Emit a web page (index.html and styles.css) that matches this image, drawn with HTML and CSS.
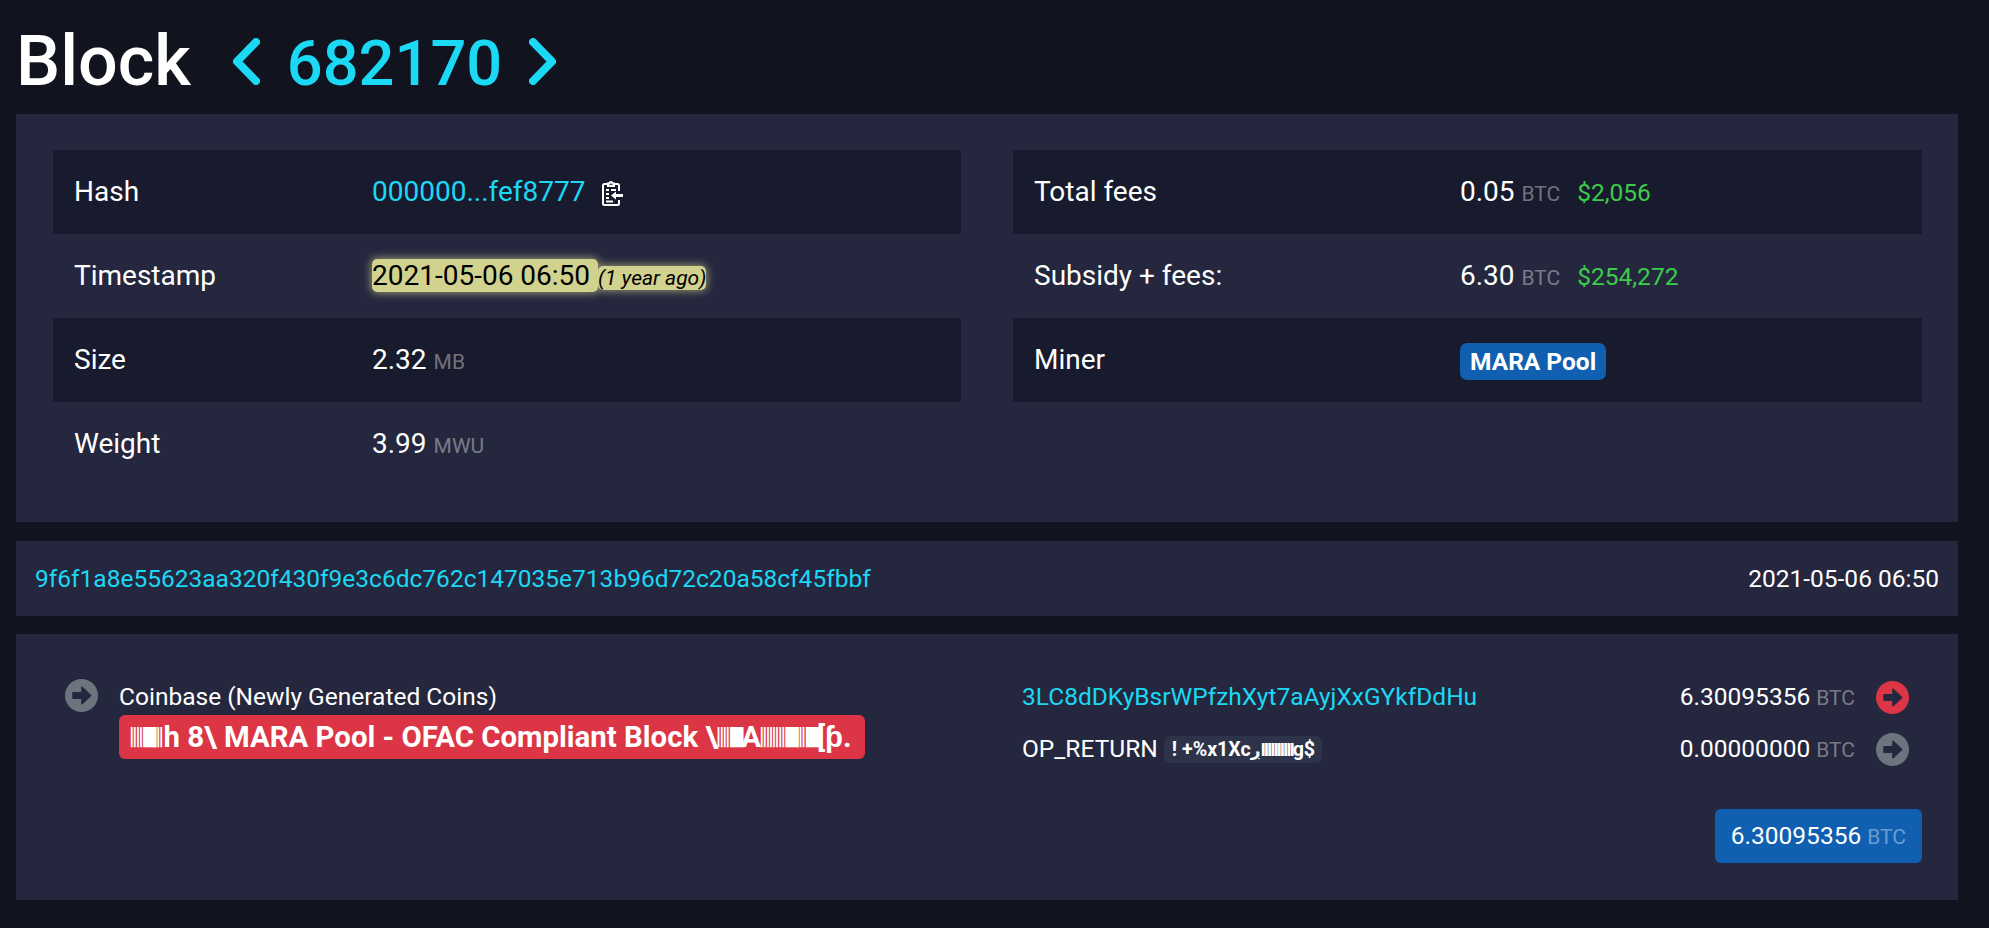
FILE: index.html
```html
<!DOCTYPE html>
<html lang="en">
<head>
<meta charset="utf-8">
<title>Block 682170</title>
<link rel="stylesheet" href="styles.css">
</head>
<body>
<header class="title">
  <h1>Block</h1>
  <a class="nav prev" href="#" aria-label="Previous block"><svg viewBox="0 0 27 47" class="chev"><path d="M23 4 L4 23.500 L23 43"/></svg></a>
  <a class="height" href="#">682170</a>
  <a class="nav" href="#" aria-label="Next block"><svg viewBox="0 0 27 47" class="chev"><path d="M4 4 L23 23.500 L4 43"/></svg></a>
</header>
<section class="box details">
  <div class="col">
    <div class="row"><span class="key">Hash</span><span class="val"><a href="#">000000...fef8777</a><svg class="clip" viewBox="0 0 24 28"><path class="clip-o" d="M8 5H4.500A1.500 1.500 0 0 0 3 6.500V24.500A1.500 1.500 0 0 0 4.500 26H17.500A1.500 1.500 0 0 0 19 24.500V21M19 12V6.500A1.500 1.500 0 0 0 17.500 5H14"/><path class="clip-o" d="M8 7V4.500H9.500A1.500 1.500 0 0 1 12.500 4.500H14V7Z"/><path class="clip-l" d="M6 11H9M11 11H16M6 15H9M6 19H9M6 22.500H13"/><path class="clip-f" d="M11 16.500L16 12.500V15H23V18H16V20.500Z"/></svg></span></div>
    <div class="row"><span class="key">Timestamp</span><span class="val"><span class="hl stamp">2021-05-06 06:50</span><i class="hl ago">(1 year ago)</i></span></div>
    <div class="row"><span class="key">Size</span><span class="val">2.32 <span class="unit">MB</span></span></div>
    <div class="row"><span class="key">Weight</span><span class="val">3.99 <span class="unit">MWU</span></span></div>
  </div>
  <div class="col">
    <div class="row"><span class="key k2">Total fees</span><span class="val">0.05 <span class="unit">BTC</span> <span class="usd">$2,056</span></span></div>
    <div class="row"><span class="key k2">Subsidy + fees:</span><span class="val">6.30 <span class="unit">BTC</span> <span class="usd">$254,272</span></span></div>
    <div class="row"><span class="key k2">Miner</span><span class="val"><span class="miner">MARA Pool</span></span></div>
  </div>
</section>
<section class="box txhead">
  <a href="#">9f6f1a8e55623aa320f430f9e3c6dc762c147035e713b96d72c20a58cf45fbbf</a>
  <span>2021-05-06 06:50</span>
</section>
<section class="box tx">
  <div class="tx-grid">
    <div class="inputs">
      <svg class="arrow grey" viewBox="0 0 32 32"><use href="#arr"/></svg>
      <div class="in-text">
        <div>Coinbase (Newly Generated Coins)</div>
        <div class="badge-red"><span class="g bars">▏▏▏▏</span><span class="g solid">█</span><span class="g bars">▏▏▏</span>h 8\ MARA Pool - OFAC Compliant Block \<span class="g bars">▏▏▏▏</span><span class="g solid">█</span>A<span class="g bars">▏▏▏▏▏▏▏▏</span><span class="g solid">█</span><span class="g bars">▏▏▏</span><span class="g solid">█</span>[ƥ.</div>
      </div>
    </div>
    <div class="outputs">
      <div class="out"><a href="#">3LC8dDKyBsrWPfzhXyt7aAyjXxGYkfDdHu</a><span class="amt">6.30095356 <span class="unit">BTC</span></span><svg class="arrow red" viewBox="0 0 32 32"><use href="#arr"/></svg></div>
      <div class="out"><span class="opret">OP_RETURN <span class="hex">! +%x1Xc<span class="ar">ڔ</span><span class="sm">IIIIIIIIII</span>g$</span></span><span class="amt">0.00000000 <span class="unit">BTC</span></span><svg class="arrow grey" viewBox="0 0 32 32"><use href="#arr"/></svg></div>
    </div>
  </div>
  <div class="total"><span class="total-btn">6.30095356 <span class="unit">BTC</span></span></div>
</section>
<svg width="0" height="0" class="defs"><defs><path id="arr" fill-rule="evenodd" d="M16 0a16 16 0 1 1 0 32a16 16 0 1 1 0-32ZM17 7.500a.8.8 0 0 0-1.300.6V12.500H8a1 1 0 0 0-1 1V18.500a1 1 0 0 0 1 1H15.700V23.900a.8.8 0 0 0 1.300.6L25.500 16.600a.8.8 0 0 0 0-1.200Z"/></defs></svg>
</body>
</html>
```
FILE: styles.css
```css
* { box-sizing: border-box; }
html, body { margin: 0; padding: 0; }
body {
  background: #11131f;
  color: #fff;
  font-family: Roboto, "Liberation Sans", sans-serif;
  font-size: 28px;
  line-height: 42px;
  height: 928px;
  overflow: hidden;
  padding: 0 31px 0 16px;
}
a { color: #1bd8f4; text-decoration: none; }
.title { display: flex; align-items: baseline; height: 114px; padding-top: 19px; }
h1 { margin: 0; font-size: 70px; font-weight: 500; line-height: 84px; }
.height { font-size: 63.200px; font-weight: 500; line-height: 84px; margin: 0 27px; }
.nav { display: flex; }
.prev { margin-left: 42px; }
.chev { width: 27px; height: 47px; }
.chev path { fill: none; stroke: #1bd8f4; stroke-width: 8; stroke-linecap: round; stroke-linejoin: round; }
.box { background: #24273e; }
.details { height: 408px; padding: 36px 36px 0 37px; display: grid; grid-template-columns: 908px 909px; justify-content: space-between; margin-bottom: 19px; }
.row { display: flex; height: 84px; padding: 21px 21px; }
.col .row:nth-child(odd) { background: #181b2d; }
.key { width: 298px; flex: none; }
.k2 { width: 426px; }
.unit { color: #ffffff66; font-size: 21px; }
.usd { color: #3bcc49; font-size: 24.500px; margin-left: 10px; }
.clip { width: 24px; height: 28px; margin-left: 14px; vertical-align: -6px; }
.clip-o { fill: none; stroke: #fff; stroke-width: 2; }
.clip-l { fill: none; stroke: #fff; stroke-width: 2; }
.clip-f { fill: #fff; stroke: #181b2d; stroke-width: 1; paint-order: stroke; }
.hl { background: #d2d28f; color: #000; border-radius: 5px; box-shadow: 0 0 9px 1px #d2d28fa8; }
.stamp { padding-right: 8px; }
.ago { font-size: 21px; }
.miner { display: inline-block; background: #105fb0; border-radius: 7px; font-size: 24.500px; font-weight: 700; line-height: 37px; padding: 0 10px; vertical-align: -1px; }
.txhead { height: 75px; margin-bottom: 18px; padding: 0 19px; display: flex; justify-content: space-between; align-items: center; font-size: 24.500px; }
.tx { height: 266px; font-size: 24.500px; line-height: 36px; padding: 45px 36px 0 37px; }
.tx-grid { display: grid; grid-template-columns: 969px 1fr; }
.inputs { display: flex; gap: 21px; padding-left: 12px; }
.arrow { width: 33px; height: 33px; flex: none; }
.grey { fill: #6c757d; }
.red { fill: #dc3545; }
.badge-red { display: inline-block; background: #dc3545; border-radius: 6px; font-weight: 700; font-size: 29.400px; line-height: 44px; padding: 0 13px 0 12px; white-space: nowrap; }
.g { font-family: "DejaVu Sans", sans-serif; font-size: 17px; font-weight: 400; line-height: 1; vertical-align: 4px; }
.bars { letter-spacing: -10px; }
.solid { letter-spacing: -2px; }
.ar { font-family: "DejaVu Sans", sans-serif; font-size: 17px; line-height: 1; }
.sm { font-size: 18.500px; letter-spacing: -2.200px; line-height: 1; }
.outputs { display: flex; flex-direction: column; gap: 16px; padding-right: 13px; }
.out { display: flex; align-items: center; height: 36px; }
.out a, .opret { flex: 1; white-space: nowrap; }
.hex { display: inline-block; background: #2d3348; border-radius: 6px; font-size: 19.600px; font-weight: 700; line-height: 27px; padding: 0 7px 0 8px; vertical-align: 1px; }
.amt { margin-right: 21px; }
.total { display: flex; justify-content: flex-end; margin-top: 42px; }
.total-btn { background: #105fb0; border-radius: 6px; height: 54px; line-height: 54px; padding: 0 16px; }
.defs { position: absolute; }
```
